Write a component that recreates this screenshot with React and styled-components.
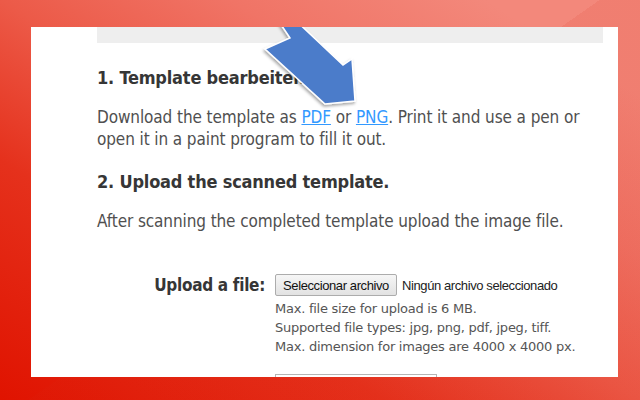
import React from "react";
import styled, { createGlobalStyle } from "styled-components";

const GlobalStyle = createGlobalStyle`
  html, body {
    margin: 0;
    padding: 0;
    width: 640px;
    height: 400px;
    overflow: hidden;
  }
`;

const Screen = styled.div`
  width: 640px;
  height: 400px;
  box-sizing: border-box;
  padding: 27px 22px 23px 31px;
  display: flex;
  background:
    linear-gradient(145deg, transparent 49.5%, rgba(215, 40, 20, 0.1) 49.5%),
    linear-gradient(to top right, #e01300 0%, #e5311c 30%, #ec5a48 50%, #f07466 68%, #f3887b 88%);
`;

const Panel = styled.div`
  flex: 1;
  position: relative;
  overflow: hidden;
  background: #fff;
  padding: 0 15px 0 66px;
  font-family: "DejaVu Sans Condensed", "DejaVu Sans", sans-serif;
  color: #505050;
`;

const TopBar = styled.div`
  height: 16px;
  background: #eeeeee;
`;

const Heading = styled.h2`
  margin: ${({ $top }) => $top}px 0 0;
  font-size: 18px;
  line-height: 24px;
  font-weight: bold;
  color: #363636;
  letter-spacing: -0.2px;
`;

const Text = styled.p`
  margin: ${({ $top }) => $top}px 0 0;
  font-size: 17px;
  line-height: 22px;
  letter-spacing: -0.1px;
`;

const Link = styled.a`
  color: #3399ff;
  text-decoration: underline;
`;

const FormRow = styled.div`
  display: grid;
  grid-template-columns: 168px 1fr;
  column-gap: 10px;
  margin-top: ${({ $top }) => $top}px;
`;

const Label = styled.div`
  text-align: right;
  font-size: 17px;
  line-height: 22px;
  font-weight: bold;
  color: #363636;
  letter-spacing: -0.3px;
`;

const Field = styled.div`
  display: flex;
  flex-direction: column;
`;

const FileLine = styled.div`
  display: flex;
  align-items: center;
  gap: 5px;
  height: 22px;
  font-family: "Liberation Sans", Arial, sans-serif;
  font-size: 13px;
  letter-spacing: -0.4px;
  color: #222;
`;

const FileButton = styled.button`
  height: 22px;
  width: 122px;
  padding: 0;
  border: 1px solid #acacac;
  border-radius: 2px;
  background: linear-gradient(#f6f6f6, #e2e2e2);
  font-family: "Liberation Sans", Arial, sans-serif;
  font-size: 13px;
  letter-spacing: -0.4px;
  color: #111;
`;

const Hints = styled.div`
  margin-top: 3px;
  font-family: "DejaVu Sans", sans-serif;
  font-size: 13px;
  line-height: 19px;
  letter-spacing: -0.25px;
  color: #555;
`;

const TextInput = styled.div`
  width: 160px;
  height: 22px;
  border: 1px solid #b5b5b5;
`;

const Overlay = styled.svg`
  position: absolute;
  left: 0;
  top: 0;
  width: 100%;
  height: 100%;
  pointer-events: none;
`;

const Arrow = () => (
  <Overlay>
    <defs>
      <filter id="shade" x="-20%" y="-20%" width="140%" height="140%">
        <feDropShadow dx="-1" dy="2" stdDeviation="1.5" floodColor="#000" floodOpacity="0.35" />
      </filter>
    </defs>
    <g transform="translate(-31,-27)">
      <polygon
        points="276,17 292,17 343,65 352,59 355,101 325,104 265,49 290,38"
        fill="#4b7bca"
        stroke="#fff"
        strokeWidth="1.5"
        strokeLinejoin="miter"
        filter="url(#shade)"
      />
    </g>
  </Overlay>
);

export default function App() {
  return (
    <>
      <GlobalStyle />
      <Screen>
        <Panel>
          <TopBar />
          <Heading $top={23}>1. Template bearbeiten</Heading>
          <Text $top={16}>
            Download the template as <Link href="#">PDF</Link> or{" "}
            <Link href="#">PNG</Link>. Print it and use a pen or open it in a
            paint program to fill it out.
          </Text>
          <Heading $top={20}>2. Upload the scanned template.</Heading>
          <Text $top={16}>
            After scanning the completed template upload the image file.
          </Text>
          <FormRow $top={42}>
            <Label>Upload a file:</Label>
            <Field>
              <FileLine>
                <FileButton>Seleccionar archivo</FileButton>
                Ningún archivo seleccionado
              </FileLine>
              <Hints>
                Max. file size for upload is 6 MB.
                <br />
                Supported file types: jpg, png, pdf, jpeg, tiff.
                <br />
                Max. dimension for images are 4000 x 4000 px.
              </Hints>
            </Field>
          </FormRow>
          <FormRow $top={18}>
            <Label>Email:</Label>
            <Field>
              <TextInput />
            </Field>
          </FormRow>
          <Arrow />
        </Panel>
      </Screen>
    </>
  );
}
